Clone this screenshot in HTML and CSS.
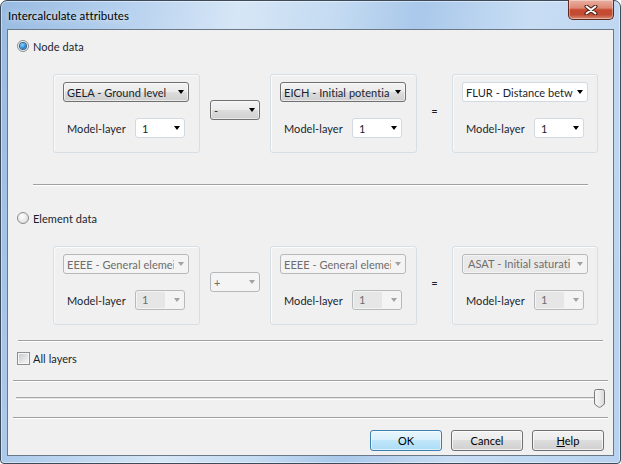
FILE: index.html
```html
<!DOCTYPE html>
<html>
<head>
<meta charset="utf-8">
<title>Intercalculate attributes</title>
<link rel="stylesheet" href="styles.css">
</head>
<body>
<div class="window">
  <div class="titlebar">
    <span class="title">Intercalculate attributes</span>
    <div class="close">
      <svg width="14" height="10" viewBox="0 0 14 10">
        <path d="M2.5,1.5 L11.5,8.5 M11.5,1.5 L2.5,8.5" stroke="#4a2018" stroke-width="4" stroke-linecap="round" fill="none"/>
        <path d="M2.5,1.5 L11.5,8.5 M11.5,1.5 L2.5,8.5" stroke="#ffffff" stroke-width="2" stroke-linecap="round" fill="none"/>
      </svg>
    </div>
  </div>
  <div class="client">
    <div class="radio-row first">
      <span class="radio checked"><span class="dot"></span></span>
      <span class="lbl">Node data</span>
    </div>
    <div class="group-row">
      <div class="group">
        <div class="combo list wide"><span class="val">GELA - Ground level</span><span class="arrow"></span></div>
        <div class="layer-row"><span class="layer-label">Model-layer</span><div class="combo white small"><span class="val">1</span><span class="arrow"></span></div></div>
      </div>
      <div class="combo list op"><span class="val">-</span><span class="arrow"></span></div>
      <div class="group">
        <div class="combo list wide"><span class="val">EICH - Initial potentia</span><span class="arrow"></span></div>
        <div class="layer-row"><span class="layer-label">Model-layer</span><div class="combo white small"><span class="val">1</span><span class="arrow"></span></div></div>
      </div>
      <div class="eq">=</div>
      <div class="group last">
        <div class="combo white wide"><span class="val">FLUR - Distance betw</span><span class="arrow"></span></div>
        <div class="layer-row"><span class="layer-label">Model-layer</span><div class="combo white small"><span class="val">1</span><span class="arrow"></span></div></div>
      </div>
    </div>
    <div class="sep sep1"></div>
    <div class="radio-row second">
      <span class="radio"></span>
      <span class="lbl">Element data</span>
    </div>
    <div class="group-row">
      <div class="group">
        <div class="combo dis wide"><span class="val">EEEE - General elemei</span><span class="arrow"></span></div>
        <div class="layer-row"><span class="layer-label">Model-layer</span><div class="combo dis small"><span class="val hi">1</span><span class="arrow"></span></div></div>
      </div>
      <div class="combo dis op"><span class="val">+</span><span class="arrow"></span></div>
      <div class="group">
        <div class="combo dis wide"><span class="val">EEEE - General elemei</span><span class="arrow"></span></div>
        <div class="layer-row"><span class="layer-label">Model-layer</span><div class="combo dis small"><span class="val hi">1</span><span class="arrow"></span></div></div>
      </div>
      <div class="eq">=</div>
      <div class="group last">
        <div class="combo dis wide hiwide"><span class="val hi">ASAT - Initial saturati</span><span class="arrow"></span></div>
        <div class="layer-row"><span class="layer-label">Model-layer</span><div class="combo dis small"><span class="val hi">1</span><span class="arrow"></span></div></div>
      </div>
    </div>
    <div class="sep sep2"></div>
    <div class="check-row">
      <span class="check"></span>
      <span class="lbl">All layers</span>
    </div>
    <div class="sep sep3"></div>
    <div class="slider">
      <div class="track"></div>
      <svg class="thumb" width="11" height="19" viewBox="0 0 11 19">
        <defs>
          <linearGradient id="tg" x1="0" y1="0" x2="1" y2="0">
            <stop offset="0" stop-color="#f6f6f6"/>
            <stop offset="0.5" stop-color="#ececec"/>
            <stop offset="1" stop-color="#d6d6d6"/>
          </linearGradient>
        </defs>
        <path d="M0.5,2.5 Q0.5,0.5 2.5,0.5 H8.5 Q10.5,0.5 10.5,2.5 V14 Q10.5,15 9.5,16 L6.5,18 Q5.5,18.6 4.5,18 L1.5,16 Q0.5,15 0.5,14 Z" fill="url(#tg)" stroke="#7a7a7a"/>
      </svg>
    </div>
    <div class="sep sep4"></div>
    <div class="btn-row">
      <div class="btn default">OK</div>
      <div class="btn">Cancel</div>
      <div class="btn"><span><u>H</u>elp</span></div>
    </div>
  </div>
</div>
</body>
</html>
```
FILE: styles.css
```css
* { box-sizing: border-box; }
html, body { margin: 0; padding: 0; }
body {
  width: 621px;
  height: 464px;
  overflow: hidden;
  background: #ffffff;
  font-family: Lato, "Liberation Sans", sans-serif;
  font-size: 11px;
  letter-spacing: 0.05px;
  color: #1a1f2e;
}
.window {
  width: 621px;
  height: 464px;
  border: 1px solid #3d4a5a;
  border-radius: 7px 7px 4px 4px;
  background: linear-gradient(100deg, #98bbe2 0%, #b6d1ee 18%, #d6e6f6 34%, #c4dbf2 48%, #a9c8ea 60%, #c8ddf4 76%, #b7d2ef 100%);
  display: flex;
  flex-direction: column;
  box-shadow: inset 0 0 0 1px rgba(255,255,255,0.45);
}
.titlebar {
  flex: none;
  height: 28px;
  display: flex;
  align-items: center;
  padding-left: 7px;
  padding-right: 6px;
}
.title {
  flex: 1;
  color: #000;
  font-size: 11.5px;
  text-shadow: 0 0 6px rgba(255,255,255,0.9);
}
.close {
  align-self: flex-start;
  margin-top: -1px;
  width: 46px;
  height: 20px;
  border: 1px solid #5e2a20;
  border-top: none;
  border-radius: 0 0 5px 5px;
  background: linear-gradient(#eab0a2 0%, #dd8873 42%, #c6492f 52%, #c24d34 78%, #d98e78 100%);
  box-shadow: inset 0 0 0 1px rgba(255,255,255,0.35);
  display: flex;
  align-items: center;
  justify-content: center;
}
.client {
  flex: none;
  height: 427px;
  margin: 0 6px;
  border: 1px solid #6b7888;
  background: #f0f0f0;
  display: flex;
  flex-direction: column;
}
.radio-row {
  display: flex;
  align-items: center;
  height: 16px;
  padding-left: 9px;
  gap: 4px;
}
.radio-row.first { margin-top: 8px; }
.radio-row.second { margin-top: 24px; }
.radio {
  width: 12px;
  height: 12px;
  border-radius: 50%;
  border: 1px solid #8a8c8e;
  background: radial-gradient(circle at 40% 35%, #ffffff 0%, #e6e6e6 60%, #cfcfcf 100%);
  display: flex;
  align-items: center;
  justify-content: center;
}
.radio.checked {
  background: radial-gradient(circle at 45% 40%, #ffffff 0%, #f2f2f2 70%, #dcdcdc 100%);
}
.dot {
  width: 6px;
  height: 6px;
  border-radius: 50%;
  background: radial-gradient(circle at 40% 35%, #8ed8ff 0%, #2a8ad8 55%, #0e4f97 100%);
  box-shadow: 0 0 0 1px #35618e;
}
.group-row {
  display: flex;
  align-items: flex-start;
  padding-left: 45px;
  margin-top: 20px;
}
.group {
  width: 147px;
  height: 79px;
  border: 1px solid #d5dfe5;
  border-radius: 3px;
  padding: 7px 0 0 9px;
  box-shadow: inset 1px 1px 0 #fbfbfb;
}
.group.last { width: 146px; }
.combo {
  height: 20px;
  border-radius: 3px;
  display: flex;
  align-items: center;
  overflow: hidden;
}
.combo .val {
  flex: 1;
  white-space: nowrap;
  overflow: hidden;
}
.arrow {
  flex: none;
  width: 0;
  height: 0;
  border-left: 3.5px solid transparent;
  border-right: 3.5px solid transparent;
  border-top: 4px solid #000;
  margin-left: 4px;
  margin-right: 4px;
}
.wide { width: 126px; padding-left: 3px; }
.small { width: 50px; padding-left: 6px; }
.op { width: 50px; margin-left: 10px; margin-right: 10px; margin-top: 26px; padding-left: 3px; }
.list {
  border: 1px solid #707070;
  background: linear-gradient(#f2f2f2 0%, #ebebeb 50%, #dddddd 50%, #cfcfcf 100%);
  box-shadow: inset 0 0 0 1px rgba(255,255,255,0.55);
}
.white {
  border: 1px solid #d3d9e0;
  background: #ffffff;
}
.dis {
  border: 1px solid #b5b9bc;
  background: #f4f4f4;
  color: #6d6d6d;
}
.dis .arrow { border-top-color: #a2a2a2; }
.dis.small { padding-left: 1px; }
.dis.small .val.hi {
  flex: none;
  width: 28px;
  height: 16px;
  line-height: 16px;
  padding-left: 5px;
  background: #e6e6e6;
  margin-right: auto;
}
.dis.hiwide { padding-left: 1px; }
.dis.hiwide .val.hi {
  flex: none;
  width: 106px;
  height: 16px;
  line-height: 16px;
  padding-left: 4px;
  background: #e9e9e9;
  margin-right: auto;
}
.layer-row {
  display: flex;
  align-items: center;
  margin-top: 16px;
  padding-left: 4px;
  height: 20px;
}
.layer-label { width: 68px; flex: none; }
.eq {
  width: 35px;
  text-align: center;
  margin-top: 29px;
  line-height: 16px;
}
.sep {
  height: 2px;
  border-top: 1px solid #a0a0a0;
  border-bottom: 1px solid #ffffff;
}
.sep1 { margin: 31px 25px 0 25px; }
.sep2 { margin: 15px 10px 0 10px; }
.sep3 { margin: 14px 5px 0 5px; }
.sep4 { margin: 9px 5px 0 5px; }
.check-row {
  display: flex;
  align-items: center;
  height: 16px;
  margin-top: 8px;
  padding-left: 9px;
  gap: 3px;
}
.check {
  width: 13px;
  height: 13px;
  border: 1px solid #8e8f8f;
  background: linear-gradient(135deg, #c4c8cd 0%, #e6e7e8 60%, #f7f7f7 100%);
  box-shadow: inset 0 0 0 1px #f6f6f6;
}
.slider {
  display: flex;
  align-items: center;
  height: 19px;
  margin-top: 7px;
  padding-left: 8px;
  padding-right: 8px;
}
.track {
  flex: 1;
  height: 3px;
  border-top: 1px solid #a8a8a8;
  border-bottom: 1px solid #ffffff;
  background: #e2e2e2;
}
.thumb {
  flex: none;
  margin-left: -5px;
  display: block;
}
.btn-row {
  display: flex;
  justify-content: flex-end;
  gap: 9px;
  padding-right: 9px;
  margin-top: 11px;
}
.btn {
  width: 72px;
  height: 21px;
  border: 1px solid #707070;
  border-radius: 3px;
  background: linear-gradient(#f2f2f2 0%, #ebebeb 50%, #dddddd 50%, #cfcfcf 100%);
  box-shadow: inset 0 0 0 1px rgba(255,255,255,0.7);
  display: flex;
  align-items: center;
  justify-content: center;
  color: #000;
}
.btn.default {
  border-color: #3c7fb1;
  background: linear-gradient(#e9f6fd 0%, #d7effc 50%, #c0e6fa 50%, #acdcf6 100%);
  box-shadow: inset 0 0 0 1px rgba(255,255,255,0.6);
}
```
